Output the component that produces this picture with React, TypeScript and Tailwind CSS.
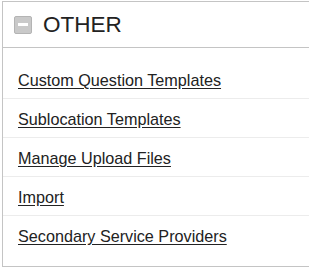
import React from 'react';

const LINKS = [
  'Custom Question Templates',
  'Sublocation Templates',
  'Manage Upload Files',
  'Import',
  'Secondary Service Providers',
];

export default function App() {
  return (
    <div className="pt-px pl-[2px] bg-white" style={{ fontFamily: '"Liberation Sans", Arial, sans-serif' }}>
      <div className="border-l border-t border-b border-[#c4c4c4] bg-white">
        {/* header */}
        <div className="h-[46px] flex items-center pl-[11px] gap-[11px] border-b border-[#c4c4c4]">
          <span className="w-[18px] h-[18px] rounded-[2px] bg-[#c9c9c9] border border-[#b4b4b4] flex items-center justify-center">
            <span className="w-[10px] h-[3px] bg-white" />
          </span>
          <span className="text-[22.5px] leading-[26px] text-[#222]">OTHER</span>
        </div>

        <div className="pt-3 pb-3">
          {LINKS.map((label, i) => (
            <div
              key={label}
              className={`pl-[15px] pt-[11px] pb-[9px] text-[16.2px] leading-[18px] ${i < LINKS.length - 1 ? 'border-b border-[#ececec]' : ''}`}
            >
              <a href="#" className="text-[#222] underline underline-offset-[2px]">
                {label}
              </a>
            </div>
          ))}
        </div>
      </div>
    </div>
  );
}
